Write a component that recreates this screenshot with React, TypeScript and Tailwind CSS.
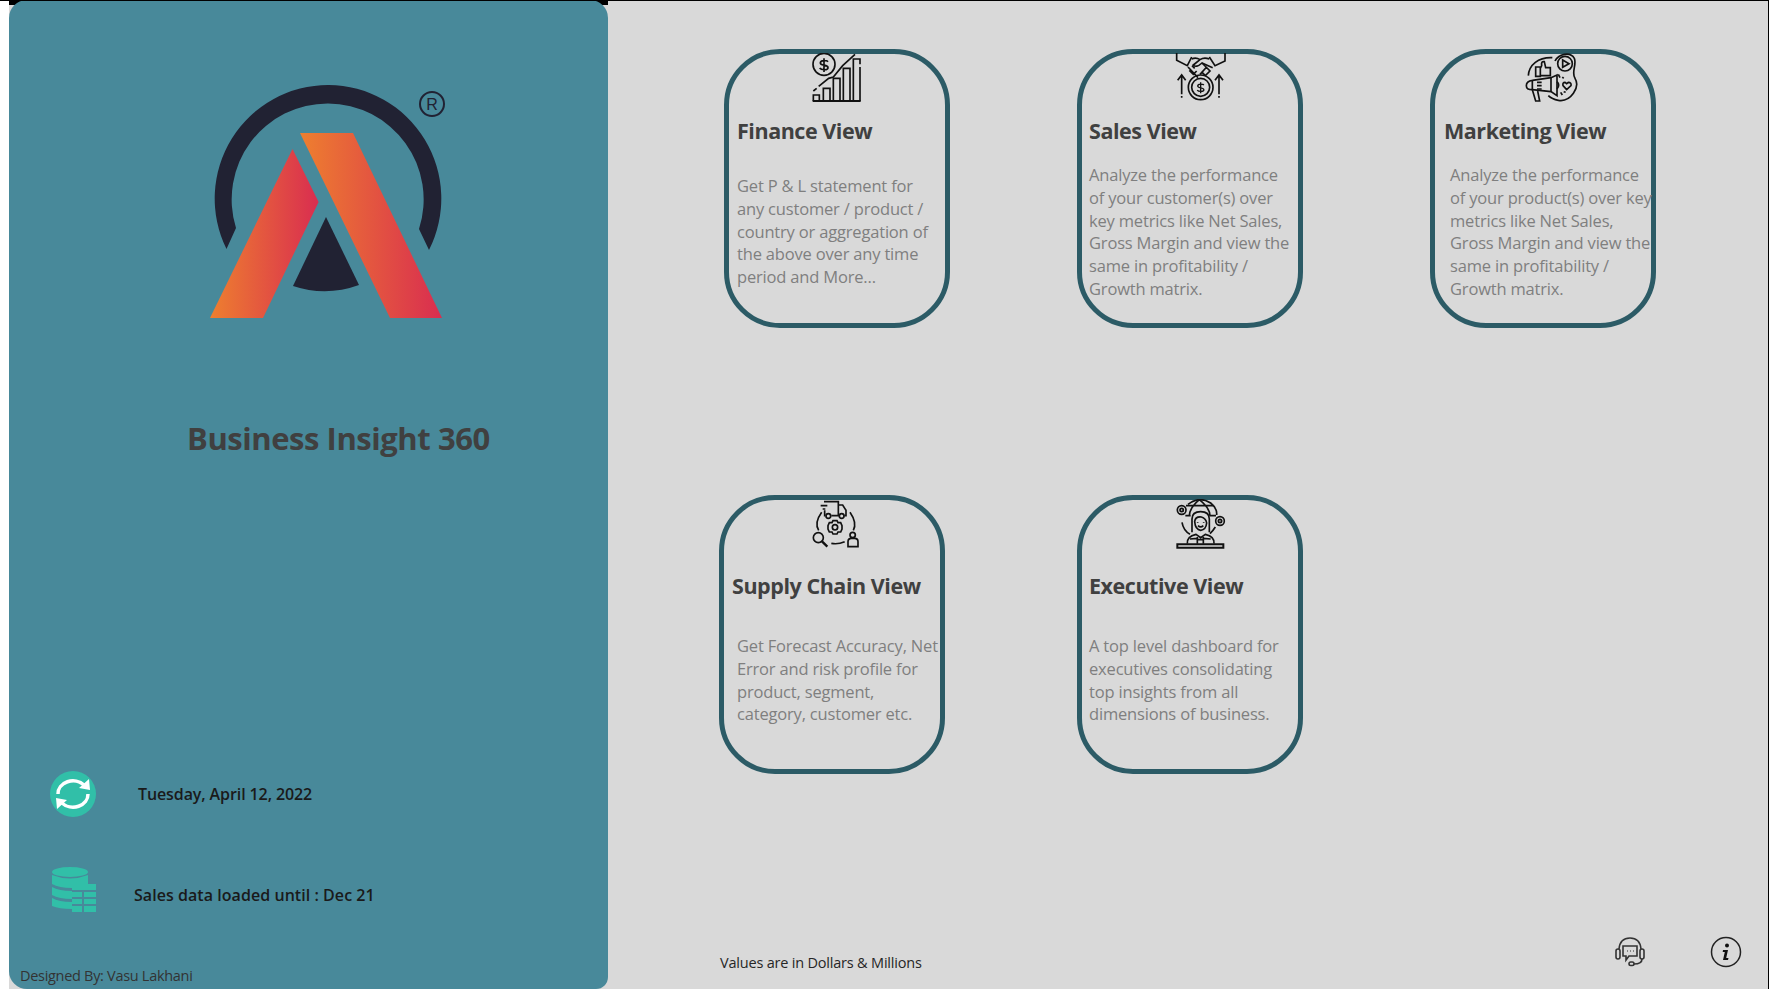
const sans = "font-['Open_Sans','Noto_Sans',sans-serif]";

/* -------------------- ICONS (drawn in 3x crop coordinates) -------------------- */

function Dollar({ x, y, s = 1 }: { x: number; y: number; s?: number }) {
  return (
    <g transform={`translate(${x} ${y}) scale(${s})`}>
      <path d="M12 -10 C8 -15 -11 -15 -11 -6 C-11 4 12 -3 12 8 C12 16 -8 16 -13 9 M0 -20 V21" fill="none" />
    </g>
  );
}

function FinanceIcon() {
  return (
    <svg viewBox="0 24 240 156" className="w-20 h-[52px] block" fill="none" stroke="#111" strokeWidth="5">
      <circle cx="72" cy="58" r="33" />
      <Dollar x={72} y={60} />
      <path d="M38 168 H182" strokeWidth="6" />
      <path d="M40 168 V150 H58 V168 M70 168 V130 H90 V168 M100 168 V100 H120 V168 M130 168 V70 H150 V168 M160 168 V42 H180 V58 M180 66 V168" />
      <path d="M40 138 L50 130 M56 124 L86 100 L100 96 L128 62 L165 28" />
    </svg>
  );
}

function SalesIcon() {
  return (
    <svg viewBox="0 24 240 156" className="w-20 h-[52px] block" fill="none" stroke="#111" strokeWidth="5">
      <path d="M50 24 V46 L82 62 L95 36 M195 24 V48 L165 62 L148 36" />
      <path d="M95 42 Q108 36 120 44 L100 60 Q108 70 126 54 L158 68 M148 42 Q132 36 120 44" />
      <path d="M84 66 L114 98 M96 62 L104 70 M88 76 L100 88 L110 78 M126 54 L150 78 L136 92 L124 80 M140 66 L120 88" />
      <circle cx="122" cy="127" r="37" />
      <circle cx="122" cy="127" r="27" />
      <Dollar x={122} y={128} s={0.8} />
      <path d="M65 148 V92 M53 106 L65 90 L77 106 M177 148 V92 M165 106 L177 90 L189 106" />
      <path d="M65 153 V158 M177 153 V158" />
    </svg>
  );
}

function MarketingIcon() {
  return (
    <svg viewBox="0 24 240 156" className="w-20 h-[52px] block" fill="none" stroke="#111" strokeWidth="5">
      <path d="M120 48 C130 28 165 18 178 40 C186 58 168 82 180 100 C196 126 168 172 130 166 C118 164 108 160 100 152" />
      <path d="M40 92 C42 60 70 36 112 38" />
      <circle cx="150" cy="56" r="22" />
      <path d="M143 45 L162 56 L143 67 Z" />
      <path d="M62 66 H76 V94 H62 Z M76 92 H106 V68 H92 L88 50 Q78 48 80 62 L76 70" />
      <path d="M34 122 Q34 108 52 106 L108 98 L126 90 V152 L108 140 L52 134 Q34 134 34 122 Z" />
      <path d="M52 106 V134 M66 112 H80 M66 122 H80 M66 132 H80 M108 98 V140 M126 110 Q136 120 126 132" />
      <path d="M52 134 L62 168 H74 L68 138" />
      <path d="M155 134 L144 122 Q142 112 150 112 L155 116 L160 112 Q170 112 168 122 Z" />
      <path d="M130 88 L135 98 M146 100 L142 96 M152 142 L146 140 M142 150 L137 142" />
    </svg>
  );
}

function SupplyIcon() {
  return (
    <svg viewBox="0 12 240 156" className="w-20 h-[52px] block" fill="none" stroke="#111" strokeWidth="5">
      <path d="M72 20 H115 V62 H94 M76 62 H74 V46 M115 30 H128 L138 46 V62 H133 M115 62 H117" />
      <circle cx="85" cy="63" r="7" />
      <circle cx="125" cy="63" r="7" />
      <path d="M62 32 H82 M68 42 H76" />
      <path d="M65 52 Q42 84 56 106 M150 52 Q172 84 160 106 M94 145 Q114 149 134 140" />
      <circle cx="55" cy="128" r="15" />
      <path d="M66 139 L82 155" strokeWidth="7" />
      <circle cx="105" cy="97" r="8" />
      <path d="M99 77 H111 L114 83 L122 83 L126 92 V102 L122 111 H114 L111 117 H99 L96 111 H88 L84 102 V92 L88 83 H96 Z" />
      <circle cx="158" cy="120" r="8" />
      <path d="M144 155 V140 Q144 130 154 130 H164 Q174 130 174 140 V155 Z" />
    </svg>
  );
}

function ExecutiveIcon() {
  return (
    <svg viewBox="0 12 240 156" className="w-20 h-[52px] block" fill="none" stroke="#111" strokeWidth="5">
      <path d="M84 28 Q118 2 152 24 Q172 40 170 60 M66 82 Q70 106 90 118 M166 96 Q160 106 150 116" />
      <path d="M118 14 Q88 40 88 62 M118 14 Q150 40 150 62 M78 32 H160 M76 62 H92 M148 62 H168" />
      <circle cx="65" cy="45" r="13" />
      <circle cx="65" cy="45" r="5" />
      <circle cx="180" cy="78" r="13" />
      <circle cx="180" cy="78" r="5" />
      <path d="M96 112 V72 Q96 50 122 50 Q148 50 148 72 V112" />
      <path d="M104 80 Q106 64 124 66 Q138 70 140 84 Q138 104 122 106 Q106 104 104 80 Z" />
      <path d="M114 92 Q122 100 130 92 M113 82 V84 M131 82 V84" />
      <path d="M82 146 Q80 124 108 118 L122 128 L136 118 Q164 124 162 146 M112 146 V126 M130 146 V126 M112 134 H130 M90 132 L112 130 M152 132 L130 130" />
      <path d="M52 148 H190 V158 H52 Z" strokeWidth="6" />
    </svg>
  );
}

/* -------------------- MODEL -------------------- */

type Card = {
  title: string;
  lines: string[];
  icon: React.ReactNode;
  iconMargin: string;
  titleClass: string;
  bodyClass: string;
};

const topCards: Card[] = [
  {
    title: "Finance View",
    lines: ["Get P & L statement for", "any customer / product /", "country or aggregation of", "the above over any time", "period and More..."],
    icon: <FinanceIcon />,
    iconMargin: "ml-[71px]",
    titleClass: "mt-[10px] ml-[8px]",
    bodyClass: "mt-[28px] ml-[8px]",
  },
  {
    title: "Sales View",
    lines: ["Analyze the performance", "of your customer(s) over", "key metrics like Net Sales,", "Gross Margin and view the", "same in profitability /", "Growth matrix."],
    icon: <SalesIcon />,
    iconMargin: "ml-[78px]",
    titleClass: "mt-[10px] ml-[7px]",
    bodyClass: "mt-[17px] ml-[7px]",
  },
  {
    title: "Marketing View",
    lines: ["Analyze the performance", "of your product(s) over key", "metrics like Net Sales,", "Gross Margin and view the", "same in profitability /", "Growth matrix."],
    icon: <MarketingIcon />,
    iconMargin: "ml-[80px]",
    titleClass: "mt-[10px] ml-[9px]",
    bodyClass: "mt-[17px] ml-[15px]",
  },
];

const bottomCards: Card[] = [
  {
    title: "Supply Chain View",
    lines: ["Get Forecast Accuracy, Net", "Error and risk profile for", "product, segment,", "category, customer etc."],
    icon: <SupplyIcon />,
    iconMargin: "ml-[76px]",
    titleClass: "mt-[19px] ml-[8px]",
    bodyClass: "mt-[33px] ml-[13px]",
  },
  {
    title: "Executive View",
    lines: ["A top level dashboard for", "executives consolidating", "top insights from all", "dimensions of business."],
    icon: <ExecutiveIcon />,
    iconMargin: "ml-[78px]",
    titleClass: "mt-[19px] ml-[7px]",
    bodyClass: "mt-[33px] ml-[7px]",
  },
];

/* -------------------- COMPONENT -------------------- */

function ViewCard({ card }: { card: Card }) {
  return (
    <div className="w-[226px] h-[279px] shrink-0 border-[5px] border-[#2c5b66] rounded-[56px]">
      <div className={`${card.iconMargin} -mt-px`}>{card.icon}</div>
      <h2 className={`${card.titleClass} h-8 leading-8 text-[21.5px] font-bold tracking-[-0.45px] text-[#404040] whitespace-nowrap`}>
        {card.title}
      </h2>
      <div className={`${card.bodyClass} text-[16.5px] leading-[22.8px] tracking-[-0.18px] text-[#7f7f7f] whitespace-nowrap`}>
        {card.lines.map((line) => (
          <p key={line}>{line}</p>
        ))}
      </div>
    </div>
  );
}

function Logo() {
  return (
    <svg viewBox="200 80 250 245" className="w-[250px] h-[245px] block ml-[191px] mt-[80px]">
      <defs>
        <linearGradient id="legA" x1="0" y1="0" x2="1" y2="0">
          <stop offset="0" stopColor="#ee7f2f" />
          <stop offset="1" stopColor="#d92d50" />
        </linearGradient>
      </defs>
      <path d="M226.5 249 A113.3 113.5 0 1 1 429 250 L419 229 A96 96 0 1 0 236 228 Z" fill="#212233" />
      <path d="M292.5 149 L318.6 202 L263 318 H210 Z" fill="url(#legA)" />
      <path d="M300 133 H353 L442 318 H390 Z" fill="url(#legA)" />
      <path d="M326 217 L359 285 Q326 297 293 286 Z" fill="#212233" />
      <ellipse cx="432" cy="104" rx="12" ry="12" fill="none" stroke="#212233" strokeWidth="2" />
      <text x="432" y="110" textAnchor="middle" fontSize="16" fill="#212233" fontFamily="Liberation Sans">R</text>
    </svg>
  );
}

export default function App() {
  return (
    <div className={`${sans} w-full h-[989px] flex bg-[#d9d9d9] border-t border-r border-black overflow-hidden`}>
      <div className="w-[9px] -mt-px bg-white shrink-0" />

      {/* SIDEBAR */}
      <div className="w-[599px] shrink-0 -mt-px bg-[linear-gradient(#000_5px,#d9d9d9_5px)]">
        <div className="h-full bg-[#48899a] rounded-t-[18px] rounded-bl-[18px] rounded-br-[12px] flex flex-col">
          <Logo />
          <h1 className="mt-[91px] ml-[178px] h-11 leading-[44px] text-[31px] font-bold tracking-[-0.45px] text-[#404040] whitespace-nowrap">
            Business Insight 360
          </h1>

          <div className="mt-[311px] ml-[41px] flex items-center">
            <svg viewBox="0 0 46 46" className="w-[46px] h-[46px]">
              <circle cx="23" cy="23" r="23" fill="#31bfa8" />
              <path d="M8 23 A15 13 0 0 1 34 14" fill="none" stroke="#fff" strokeWidth="3.5" />
              <path d="M38 23 A15 13 0 0 1 12 32" fill="none" stroke="#fff" strokeWidth="3.5" />
              <path d="M29 17 L40 19 L39 8 Z M17 29 L6 27 L7 38 Z" fill="#fff" />
            </svg>
            <span className="ml-[42px] text-[16px] font-semibold text-[#1a1a1a] tracking-[-0.1px] whitespace-nowrap">
              Tuesday, April 12, 2022
            </span>
          </div>

          <div className="mt-[50px] ml-[42px] flex items-center">
            <svg viewBox="0 0 46 46" className="w-[46px] h-[46px]" fill="#31bfa8">
              <ellipse cx="19" cy="5" rx="18" ry="5" />
              <path d="M1 8 Q19 15 37 8 V17 H21 V21 Q8 21 1 17 Z" />
              <path d="M1 20 Q8 24 21 24 V32 Q8 32 1 28 Z M1 31 Q8 35 21 35 V42 Q8 42 1 39 Z" />
              <path d="M21 17 H45 V23 H21 Z M21 25 H31 V30 H21 Z M33 25 H45 V30 H33 Z M21 32 H31 V37 H21 Z M33 32 H45 V37 H33 Z M21 39 H31 V45 H21 Z M33 39 H45 V45 H33 Z" />
            </svg>
            <span className="ml-[37px] mt-[10px] text-[16px] font-semibold text-[#1a1a1a] tracking-[0.05px] whitespace-nowrap">
              Sales data loaded until : Dec 21
            </span>
          </div>

          <p className="mt-[53px] ml-[11px] text-[14.5px] leading-5 text-[#333] tracking-[-0.3px] whitespace-nowrap">
            Designed By: Vasu Lakhani
          </p>
        </div>
      </div>

      {/* VIEWS */}
      <div className="flex-1 flex flex-col pt-12">
        <div className="flex gap-[127px] ml-[116px]">
          {topCards.map((c) => (
            <ViewCard key={c.title} card={c} />
          ))}
        </div>
        <div className="flex gap-[132px] ml-[111px] mt-[167px]">
          {bottomCards.map((c) => (
            <ViewCard key={c.title} card={c} />
          ))}
        </div>

        <div className="mt-[178px] ml-[112px] flex items-center">
          <span className="text-[14.5px] text-[#262626] tracking-[-0.2px] w-[894px] shrink-0 whitespace-nowrap">
            Values are in Dollars & Millions
          </span>
          <svg viewBox="0 0 32 32" className="w-8 h-8 -mt-[22px]" fill="none" stroke="#333" strokeWidth="1.6">
            <path d="M5 13 Q6 2 16 2 Q26 2 27 13" />
            <rect x="2" y="13" width="4" height="10" rx="2" />
            <rect x="26" y="13" width="4" height="10" rx="2" />
            <path d="M9 10 H23 V20 H15 L12 24 V20 H9 Z" />
            <path d="M13 15 H13.5 M16 15 H16.5 M19 15 H19.5" strokeWidth="2" />
            <path d="M28 23 Q28 28 20 28" />
            <rect x="15" y="26" width="5" height="3.5" rx="1.7" />
          </svg>
          <svg viewBox="0 0 32 32" className="w-8 h-8 ml-[64px] -mt-[22px]">
            <circle cx="16" cy="16" r="14.5" fill="none" stroke="#222" strokeWidth="1.5" />
            <circle cx="17" cy="9.5" r="2" fill="#111" />
            <path d="M13 14 H18 L16.2 22 H18.5 L18 24 H13 L14.8 16 H12.7 Z" fill="#111" />
          </svg>
        </div>
      </div>
    </div>
  );
}
